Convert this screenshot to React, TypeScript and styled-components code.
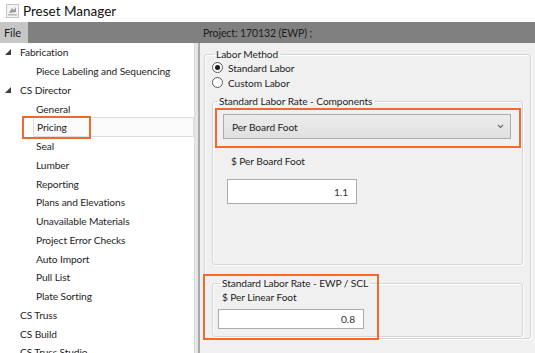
import styled, { createGlobalStyle } from 'styled-components';

const GlobalStyle = createGlobalStyle`
	html, body {
		margin: 0;
		padding: 0;
		background: #ffffff;
	}
	* {
		box-sizing: border-box;
	}
`;

const Window = styled.div`
	width: 535px;
	height: 353px;
	overflow: hidden;
	display: flex;
	flex-direction: column;
	font-family: Lato, 'Noto Sans', sans-serif;
	font-size: 10px;
	letter-spacing: -0.1px;
	color: #1e1e1e;
	background: #ffffff;
`;

const TitleBar = styled.div`
	height: 22px;
	display: flex;
	align-items: center;
	gap: 4px;
	padding-left: 6px;
	font-size: 13.5px;
	letter-spacing: 0;
	color: #111;
`;

const MenuBar = styled.div`
	height: 21px;
	display: flex;
	background: #808080;
`;

const MenuLeft = styled.div`
	width: 195px;
	display: flex;
`;

const MenuItem = styled.div`
	width: 28px;
	display: flex;
	align-items: center;
	padding-left: 4px;
	background: #c6c6c6;
	color: #1a1a1a;
	font-size: 11px;
`;

const ProjectTitle = styled.div`
	display: flex;
	align-items: center;
	padding-left: 8px;
	color: #1c1c1c;
	font-size: 10.5px;
`;

const Body = styled.div`
	flex: 1;
	display: flex;
	min-height: 0;
`;

const Tree = styled.div`
	position: relative;
	width: 195px;
	background: #ffffff;
	border-right: 1px solid #dcdcdc;
	overflow: hidden;
	font-size: 10.2px;
`;

const Splitter = styled.div`
	width: 5px;
	background: #e6e6e6;
	border-right: 2px solid #a9a9a9;
`;

const Row = styled.div<{ $level: number; $selected?: boolean }>`
	height: 18.75px;
	display: flex;
	align-items: center;
	padding-left: ${p => (p.$level === 0 ? 5 : 33)}px;
	white-space: nowrap;
	${p =>
		p.$selected &&
		`
		margin-left: 33px;
		padding-left: 0;
		border: 1px solid #dedede;
		background: #fafafa;
		height: 20px;
		margin-top: -0.6px;
		margin-bottom: -0.65px;
	`}
`;

const Expander = styled.span`
	width: 15px;
	display: flex;
	align-items: center;
`;

const RowText = styled.span<{ $level: number }>`
	padding-left: ${p => (p.$level === 0 ? 0 : 3)}px;
`;

const Annotation = styled.div`
	position: absolute;
	border: 2px solid #f26a2b;
	pointer-events: none;
`;

const Content = styled.div`
	flex: 1;
	background: #f0f0f0;
	padding: 3px 4px 0 4px;
	font-size: 10.2px;
`;

const Group = styled.fieldset`
	margin: 0;
	border: 1px solid #d5d5d5;
	border-radius: 3px;
	box-shadow: inset 1px 1px 0 #ffffff, 1px 1px 0 #ffffff;
	min-width: 0;
`;

const Legend = styled.legend`
	padding: 0 2px;
	margin-left: 2px;
	line-height: 16px;
	color: #1e1e1e;
`;

const OuterGroup = styled(Group)`
	height: 293px;
	padding: 0 7px 0 7px;
`;

const RadioList = styled.div`
	margin-top: -2px;
	margin-bottom: -1px;
`;

const RadioRow = styled.label`
	height: 15px;
	display: flex;
	align-items: center;
	gap: 5px;
	color: #1e1e1e;
`;

const RadioDot = styled.span<{ $checked?: boolean }>`
	width: 11px;
	height: 11px;
	border-radius: 50%;
	border: 1px solid #5a5a5a;
	background: #ffffff;
	display: flex;
	align-items: center;
	justify-content: center;

	&::after {
		content: '';
		width: 5px;
		height: 5px;
		border-radius: 50%;
		background: ${p => (p.$checked ? '#1a1a1a' : 'transparent')};
	}
`;

const ComponentsGroup = styled(Group)`
	margin-top: 4px;
	height: 172px;
	padding: 0 0 0 2px;
`;

const Highlight = styled.div`
	border: 2px solid #f26a2b;
	padding: 4px 8px 7px 6px;
	margin-top: -1px;
	width: 306px;
`;

const Combo = styled.div`
	height: 25px;
	border: 1px solid #acacac;
	background: linear-gradient(#ececec, #e0e0e0);
	display: flex;
	align-items: center;
	justify-content: space-between;
	padding: 0 6px 0 8px;
	color: #1e1e1e;
`;

const FieldLabel = styled.div<{ $indent: number; $mt: number }>`
	padding-left: ${p => p.$indent}px;
	margin-top: ${p => p.$mt}px;
	height: 16px;
	display: flex;
	align-items: center;
`;

const TextBoxRow = styled.div<{ $indent: number; $mt: number }>`
	padding-left: ${p => p.$indent}px;
	margin-top: ${p => p.$mt}px;
`;

const TextBox = styled.div<{ $width: number; $height: number }>`
	width: ${p => p.$width}px;
	height: ${p => p.$height}px;
	background: #ffffff;
	border: 1px solid #ababab;
	display: flex;
	align-items: center;
	justify-content: flex-end;
	padding-right: 8px;
	color: #333;
`;

const EwpWrap = styled.div`
	position: relative;
	margin-top: 10px;
`;

const EwpGroup = styled(Group)`
	height: 62px;
	padding: 0 0 0 5px;
`;

const tree: { label: string; level: number; expanded?: boolean; selected?: boolean }[] = [
	{ label: 'Fabrication', level: 0, expanded: true },
	{ label: 'Piece Labeling and Sequencing', level: 1 },
	{ label: 'CS Director', level: 0, expanded: true },
	{ label: 'General', level: 1 },
	{ label: 'Pricing', level: 1, selected: true },
	{ label: 'Seal', level: 1 },
	{ label: 'Lumber', level: 1 },
	{ label: 'Reporting', level: 1 },
	{ label: 'Plans and Elevations', level: 1 },
	{ label: 'Unavailable Materials', level: 1 },
	{ label: 'Project Error Checks', level: 1 },
	{ label: 'Auto Import', level: 1 },
	{ label: 'Pull List', level: 1 },
	{ label: 'Plate Sorting', level: 1 },
	{ label: 'CS Truss', level: 0 },
	{ label: 'CS Build', level: 0 },
	{ label: 'CS Truss Studio', level: 0 },
];

function AppIcon() {
	return (
		<svg width="13" height="14" viewBox="0 0 13 14">
			<rect x="0.5" y="0.5" width="12" height="13" fill="#f4f4f4" stroke="#c4c4c4" />
			<path d="M3 9 L6 4 L8 6 L10 3 L10 8 Z" fill="#9a9a9a" />
			<rect x="2" y="10" width="9" height="1.5" fill="#b5b5b5" />
		</svg>
	);
}

function ExpandedArrow() {
	return (
		<svg width="6" height="6" viewBox="0 0 6 6">
			<path d="M6 0 L6 6 L0 6 Z" fill="#3c3c3c" />
		</svg>
	);
}

function Chevron() {
	return (
		<svg width="7" height="5" viewBox="0 0 7 5">
			<path d="M1 1 L3.5 3.5 L6 1" fill="none" stroke="#6a6a6a" strokeWidth="1.2" />
		</svg>
	);
}

export default function App() {
	return (
		<Window>
			<GlobalStyle />
			<TitleBar>
				<AppIcon />
				<span>Preset Manager</span>
			</TitleBar>
			<MenuBar>
				<MenuLeft>
					<MenuItem>File</MenuItem>
				</MenuLeft>
				<ProjectTitle>Project: 170132 (EWP) ;</ProjectTitle>
			</MenuBar>
			<Body>
				<Tree>
					{tree.map(item => (
						<Row key={item.label} $level={item.level} $selected={item.selected}>
							{item.level === 0 && <Expander>{item.expanded && <ExpandedArrow />}</Expander>}
							<RowText $level={item.level}>{item.label}</RowText>
						</Row>
					))}
					<Annotation style={{ left: 22, top: 73, width: 69, height: 23 }} />
				</Tree>
				<Splitter />
				<Content>
					<OuterGroup>
						<Legend>Labor Method</Legend>
						<RadioList>
							<RadioRow>
								<RadioDot $checked />
								Standard Labor
							</RadioRow>
							<RadioRow>
								<RadioDot />
								Custom Labor
							</RadioRow>
						</RadioList>
						<ComponentsGroup>
							<Legend>Standard Labor Rate - Components</Legend>
							<Highlight>
								<Combo>
									<span>Per Board Foot</span>
									<Chevron />
								</Combo>
							</Highlight>
							<FieldLabel $indent={16} $mt={5}>
								$ Per Board Foot
							</FieldLabel>
							<TextBoxRow $indent={12} $mt={10}>
								<TextBox $width={130} $height={25}>
									1.1
								</TextBox>
							</TextBoxRow>
						</ComponentsGroup>
						<EwpWrap>
							<EwpGroup>
								<Legend>Standard Labor Rate - EWP / SCL</Legend>
								<FieldLabel $indent={4} $mt={-2}>
									$ Per Linear Foot
								</FieldLabel>
								<TextBoxRow $indent={0} $mt={4}>
									<TextBox $width={146} $height={20}>
										0.8
									</TextBox>
								</TextBoxRow>
							</EwpGroup>
							<Annotation style={{ left: -9, top: -1, width: 176, height: 66 }} />
						</EwpWrap>
					</OuterGroup>
				</Content>
			</Body>
		</Window>
	);
}
